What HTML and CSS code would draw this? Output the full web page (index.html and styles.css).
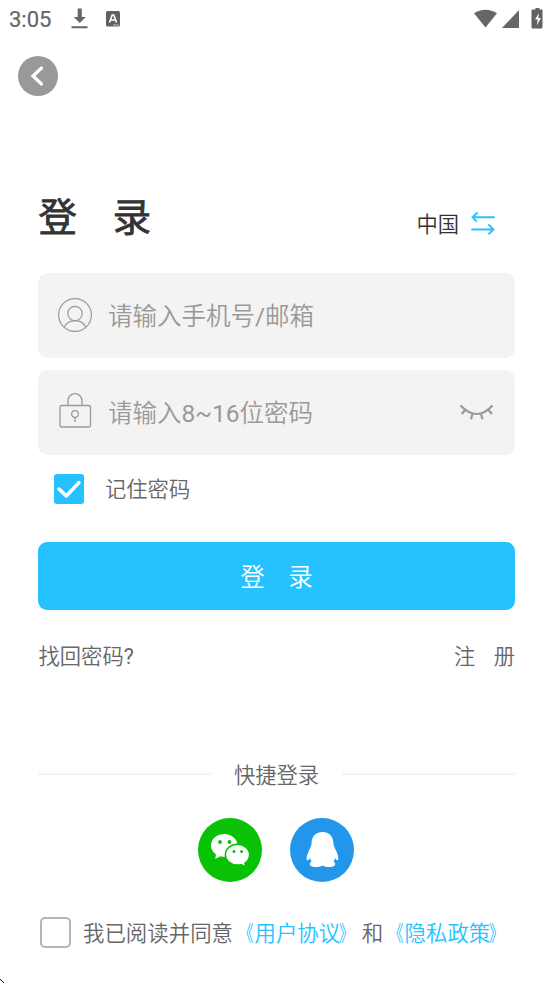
FILE: index.html
```html
<!DOCTYPE html>
<html lang="zh-CN">
<head>
<meta charset="utf-8">
<title>登录</title>
<link rel="stylesheet" href="styles.css">
</head>
<body>
<div class="screen">
  <header class="status">
    <span class="time">3:05</span>
    <svg class="download" width="18" height="24" viewBox="0 0 18 24"><path d="M6.700 1.500h4.100v8.500h4L8.750 16 2.700 10h4zM.5 19.300h16v2H.5z" fill="#666"/></svg>
    <svg class="badge" width="14" height="16" viewBox="0 0 14 16"><rect width="14" height="15.500" rx="1.500" fill="#616161"/><path d="M3.500 11.500 6.200 4h1.600l2.700 7.500M4.700 9h4.600" fill="none" stroke="#fff" stroke-width="1.600"/><path d="M7.500 14h1.200m.8 0h1.200m.8 0h1.200" stroke="#fff" stroke-width="1.200"/></svg>
    <svg class="signals" width="72" height="24" viewBox="0 0 72 24"><path d="M1 6.300C8 1.400 17 1.400 24 6.300L12.500 20.500z" fill="#666"/><path d="M29 21 46 3v18z" fill="#666"/><path d="M61.500 2.500h2V1h4v1.500h2c.6 0 1 .4 1 1V20c0 .8-.5 1.500-1.500 1.500h-8c-1 0-1.500-.7-1.500-1.500V3.500c0-.6.400-1 1-1z" transform="translate(-1)" fill="#616161"/><path d="m66 6-4 6.500h2.800l-1 6 4.200-7.500h-2.800z" fill="#fff"/></svg>
  </header>

  <button class="back" aria-label="返回"><svg width="40" height="40" viewBox="0 0 40 40"><path d="m23.500 12-8.500 8 8.500 8" fill="none" stroke="#fff" stroke-width="3.200" stroke-linecap="round"/></svg></button>

  <main>
    <div class="heading">
      <h1><span>登</span><span>录</span></h1>
      <div class="region"><span>中国</span><svg width="24" height="26" viewBox="0 0 24 26"><path d="M22.800 8.200H1.500M6 4 1.500 8.200l3.800 4M1 20.500h21.500M18 16l4.500 4.500-4.500 4.200" fill="none" stroke="#26c2ff" stroke-width="1.900" stroke-linecap="round"/></svg></div>
    </div>

    <div class="field">
      <svg class="lead" width="36" height="38" viewBox="0 0 36 38"><g fill="none" stroke="#999" stroke-width="1.200"><circle cx="18" cy="19" r="16.400"/><circle cx="18" cy="17.500" r="7.200"/><path d="M7.500 31C11 22.500 25 22.500 28.500 31"/></g></svg>
      <span class="hint">请输入手机号<b>/</b>邮箱</span>
    </div>
    <div class="field">
      <svg class="lead" width="36" height="38" viewBox="0 0 36 38"><g fill="none" stroke="#999" stroke-width="1.300"><rect x="3" y="12.500" width="30.500" height="21.500" rx="1.500"/><path d="M11 12.500V7.700a7 7 0 0 1 14 0v4.800"/><circle cx="18" cy="21" r="3.300"/><path d="M18 24.300v4.700"/></g></svg>
      <span class="hint">请输入<b>8~16</b>位密码</span>
      <svg class="eye" width="36" height="18" viewBox="0 0 36 18"><path d="M1.500 2.500Q18 19.500 33.500 2.500M6 7 2.800 11M13.500 10.500 12 16.300M22 10.500l1.500 5.800M29.500 7l3.500 4" fill="none" stroke="#999" stroke-width="2.200"/></svg>
    </div>

    <label class="remember"><span class="checked"><svg width="30" height="30" viewBox="0 0 30 30"><path d="m5 15 7.300 7L25 8.500" fill="none" stroke="#fff" stroke-width="3.500" stroke-linecap="round" stroke-linejoin="round"/></svg></span><span class="label">记住密码</span></label>

    <button class="submit"><span>登</span><span>录</span></button>

    <div class="links"><a>找回密码<b>?</b></a><a class="register"><span>注</span><span>册</span></a></div>

    <div class="quick"><span class="label">快捷登录</span></div>

    <div class="socials">
      <svg width="64" height="64" viewBox="0 0 64 64"><circle cx="32" cy="32" r="32" fill="#0ac205"/><path d="M26.200 16C18.500 16 13 21.200 13 27.600c0 3.800 2 6.800 5 8.800L17.200 41l5-2.800c1.300.4 2.700.6 4.200.6 7.300 0 13.200-5 13.200-11.300S33.500 16 26.200 16z" fill="#fff"/><path d="M39.500 26.300c-6.700 0-12.100 4.600-12.100 10.400s5.400 10.400 12.100 10.400c1.300 0 2.600-.2 3.700-.5l4.800 2.600-1.200-4c2.900-1.900 4.800-4.900 4.800-8.500 0-5.800-5.400-10.400-12.100-10.400z" fill="#fff" stroke="#0ac205" stroke-width="1.500"/><g fill="#0ac205"><circle cx="22" cy="24" r="1.900"/><circle cx="31.500" cy="24" r="1.900"/><circle cx="36" cy="33.500" r="1.500"/><circle cx="43.600" cy="33.500" r="1.500"/></g></svg>
      <svg width="64" height="64" viewBox="0 0 64 64"><circle cx="32" cy="32" r="32" fill="#2196eb"/><path d="M32.500 14C25 14 21.500 19 21.500 26c0 2-1.200 3-2 5.500-2 4-3.500 7.500-2.700 10.500.7 1 2.200-.3 3.200-2 .3 1.400.8 2.500 1.500 3.500-2.500 1.500-3 5.300 3.500 5.500 3.500 0 5.500-.5 7.500-1.600 2 1.100 4 1.600 7.500 1.600 6.500-.2 6-4 3.500-5.500.7-1 1.200-2.100 1.500-3.500 1 1.700 2.500 3 3.100 2 .8-3-.6-6.500-2.600-10.500-.8-2.500-2-3.500-2-5.500 0-7-3.500-12-11-12z" fill="#fff"/></svg>
    </div>

    <label class="agree"><span class="unchecked"></span><span class="terms">我已阅读并同意<a><i class="open">《</i>用户协议<i class="close">》</i></a>和<a><i class="open">《</i>隐私政策<i class="close">》</i></a></span></label>
  </main>
</div>
<svg class="corner" width="4" height="5" viewBox="0 0 4 5"><path d="M0 0h1v1H0zM1 1h1v1H1zM2 2h1v1H2zM3 3h1v1H3z" fill="#111"/></svg>
</body>
</html>
```
FILE: styles.css
```css
* { box-sizing: border-box; }
body {
  margin: 0;
  background: #fff;
  color: #666;
  font-family: Roboto, "Noto Sans CJK SC DemiLight", "Noto Sans CJK SC", sans-serif;
  font-weight: 350;
  overflow: hidden;
}
svg { display: block; flex: none; }
b { font-weight: 400; }
button { border: 0; padding: 0; font: inherit; }
.screen { height: 984px; }
.status { display: flex; align-items: center; height: 38px; padding: 0 8px 0 9px; }
.time { width: 62px; font-size: 22px; font-weight: 400; -webkit-text-stroke: .2px #666; }
.badge { margin-left: 17px; }
.signals { margin-left: auto; }
.back { display: block; width: 40px; height: 40px; margin: 18px 0 0 17.500px; border-radius: 50%; background: #999; }
main { padding: 0 38px; }
.heading { display: flex; justify-content: space-between; height: 177px; padding: 92px 20px 0 0; }
h1 { display: flex; gap: 36px; margin: 0; padding-left: .5px; font-size: 38.300px; line-height: 60px; font-weight: 400; color: #333; -webkit-text-stroke: 1px #333; }
.region { display: flex; align-items: center; gap: 12px; height: 68px; font-size: 21.300px; color: #333; }
.field { display: flex; align-items: center; height: 84.500px; margin-bottom: 12.500px; padding: 0 20px 0 19px; border-radius: 10px; background: #f3f3f3; }
.hint { margin-left: 15px; padding-bottom: 1px; font-size: 24.500px; color: #999; }
.eye { margin-left: auto; }
.remember { display: flex; align-items: center; gap: 21px; height: 43px; padding-left: 16px; font-size: 21.300px; }
.label { padding-bottom: 2px; }
.checked { width: 30px; height: 30px; border-radius: 3px; background: #26c2ff; }
.submit { display: flex; justify-content: center; align-items: center; gap: 23.500px; width: 477px; height: 68px; margin-top: 32px; padding-bottom: 1px; border-radius: 9px; background: #26c2ff; color: #fff; font-size: 24.500px; }
.links { display: flex; justify-content: space-between; height: 92px; align-items: center; padding-bottom: 3px; font-size: 21.300px; }
.links a:first-child { padding-left: .5px; }
.register { display: flex; gap: 18.500px; }
.quick { display: flex; align-items: center; gap: 23px; height: 32px; margin-top: 56px; font-size: 21.300px; }
.quick::before, .quick::after { content: ""; flex: 1; height: 2px; background: #f3f3f3; }
.socials { display: flex; justify-content: center; gap: 28px; margin-top: 28px; padding-right: 1px; }
.agree { display: flex; align-items: center; gap: 12px; height: 40px; margin-top: 30px; padding-left: 2px; font-size: 21.450px; white-space: nowrap; }
.agree a { color: #26c2ff; }
.terms { padding-bottom: 2px; }
.agree i { display: inline-block; width: 21.450px; font-style: normal; }
.agree .open { transform-origin: right; transform: translateX(-1px) scaleX(.7); }
.agree .close { transform-origin: left; transform: translateX(-1px) scaleX(.7); }
.unchecked { width: 31px; height: 31px; border: 2px solid #b5b5b5; border-radius: 5px; }
.corner { position: absolute; left: 0; bottom: 0; }
```
